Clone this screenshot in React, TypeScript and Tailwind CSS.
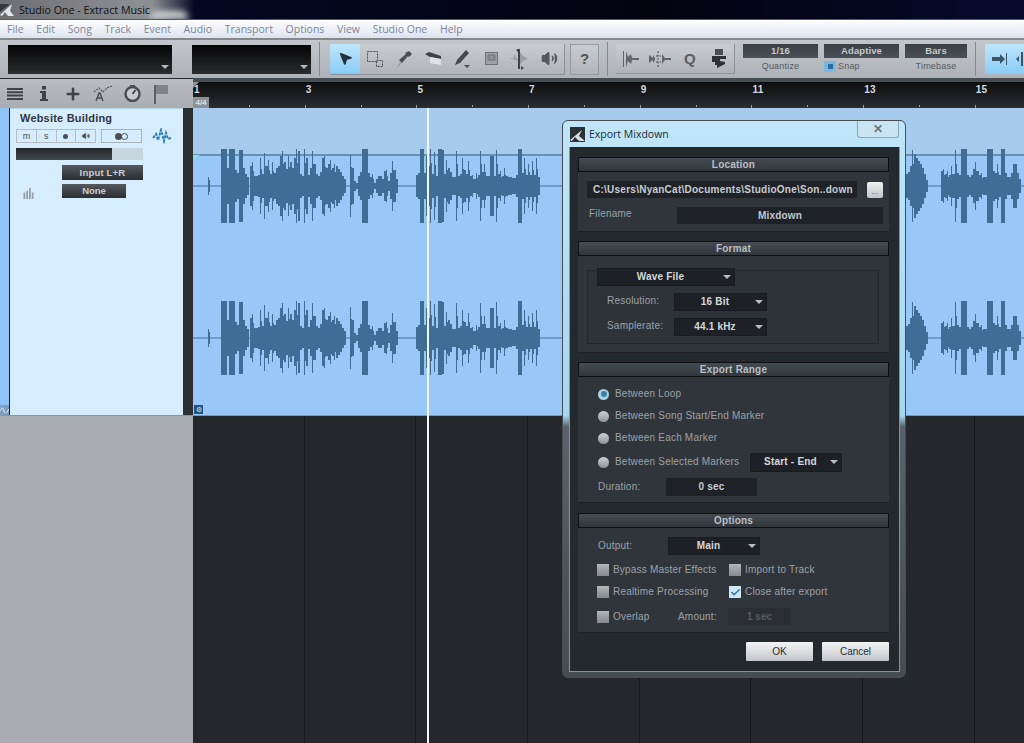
import React from 'react';
import { MousePointer2, Volume2, Plus, Check } from 'lucide-react';

const menuItems = ['File', 'Edit', 'Song', 'Track', 'Event', 'Audio', 'Transport', 'Options', 'View', 'Studio One', 'Help'];
const rulerLabels = ['1', '3', '5', '7', '9', '11', '13', '15'];

// amplitude per 2px column, [start x, amps]
const waveRuns: [number, number[]][] = [
  [208, [9]],
  [221, [37, 37, 37, 18, 37, 37, 37, 16, 13, 36, 36, 18, 12, 9]],
  [250, [20, 24, 10, 10, 11, 28, 12, 33, 20, 26, 12, 24, 13, 18, 20, 30, 35, 24, 17, 30, 24, 18, 28, 37, 35, 12, 10, 37, 28, 11, 18, 35, 22, 12, 10, 14, 28, 30, 18, 22, 26, 18, 22, 20, 17, 14, 10, 7]],
  [350, [31, 18, 5, 3, 10, 14, 37, 37, 37, 13, 9, 12, 3, 7, 10, 10, 7, 15, 16, 5, 13, 25, 16, 7]],
  [416, [11, 13, 37, 37, 13, 30, 20]],
  [430, [37, 12, 34, 10, 37, 37, 36, 12, 26, 18, 14, 9, 9, 35, 10, 12, 28, 16, 12, 25, 10, 11, 7, 13, 11, 35, 14, 22, 10, 10, 30, 30, 10, 36, 12, 15, 10, 18, 10, 9, 9, 8, 8, 11, 37, 37, 13, 28, 11, 22, 11, 25, 11, 28, 9]],
  [906, [12, 14, 20, 36, 32, 28, 25, 22, 18, 12, 6]],
  [941, [15, 17, 12, 15, 11, 20, 12, 36, 13, 11, 37, 37, 37, 11, 9, 11, 17, 24, 15, 11, 13, 9, 9, 37, 37, 37, 15, 13, 22, 11, 37, 37, 13, 9, 9, 13, 22, 22, 13, 7]],
];

function Waveform() {
  const rects: React.ReactNode[] = [];
  [186, 338].forEach((center) => {
    rects.push(<rect key={`line-${center}`} x={193} y={center - 0.5} width={831} height={1} fill="#44739b" />);
    waveRuns.forEach(([start, amps]) => {
      amps.forEach((amp, i) => {
        const x = start + i * 2;
        const wide = (amps[i - 1] ?? 0) >= amp || (amps[i + 1] ?? 0) >= amp;
        const core = Math.min(amp, Math.round(amp * 0.62));
        rects.push(<rect key={`${center}-${start}-${i}`} x={x} y={center - core} width={2} height={core * 2} fill="#3f6d95" />);
        rects.push(<rect key={`${center}-${start}-${i}-t`} x={x} y={center - amp} width={wide ? 2 : 1} height={amp * 2} fill="#3f6d95" />);
      });
    });
  });
  return (
    <svg className="absolute inset-0" width={831} height={307} viewBox="193 108 831 307">
      <path d="M193 155h831" stroke="#2c5679" strokeWidth="1" />
      <path d="M193 161l7-6h-7z" fill="#7fe0ea" />
      {rects}
    </svg>
  );
}

function ToolIcon({ children }: { children: React.ReactNode }) {
  return <div className="flex-1 flex items-center justify-center">{children}</div>;
}

function Dropdown({ w, h = 'h-[18px]', label }: { w: string; h?: string; label: string }) {
  return (
    <div className={`${w} ${h} flex items-center bg-[#1d2126] border border-[#181b1f] text-[#d5d8db] font-bold text-[10px] leading-[12px] tracking-[0.2px]`}>
      <span className="flex-1 text-center pl-1">{label}</span>
      <span className="w-0 h-0 mr-[3px] ml-1 border-x-[4px] border-t-[4px] border-x-transparent border-t-[#b9bdc2]" />
    </div>
  );
}

function Section({ title, h, mt, children }: { title: string; h: string; mt: string; children: React.ReactNode }) {
  return (
    <div className={`${h} ${mt} w-[311px] flex flex-col bg-[#30353c] border-b border-[#1c1f23]`}>
      <div className="h-[15px] shrink-0 flex items-center justify-center bg-gradient-to-b from-[#454b52] to-[#31363c] border border-[#0d0f12] text-[#b9bec3] font-bold text-[10px] leading-[12px] tracking-[0.2px]">
        {title}
      </div>
      {children}
    </div>
  );
}

const labelText = 'text-[#9ca1a6] text-[10px] leading-[12px] tracking-[0.2px] whitespace-nowrap';

function Radio({ label, on }: { label: string; on?: boolean }) {
  return (
    <div className="flex items-center">
      <span className={`w-[11px] h-[11px] rounded-full flex items-center justify-center ${on ? 'bg-[#a9d3e6]' : 'bg-gradient-to-b from-[#d0d2d4] to-[#8f9296]'}`}>
        {on && <span className="w-[6px] h-[6px] rounded-full bg-[#3f7ea3]" />}
      </span>
      <span className={`ml-[6px] ${labelText}`}>{label}</span>
    </div>
  );
}

function CheckBox({ label, on, w }: { label: string; on?: boolean; w: string }) {
  return (
    <div className={`${w} flex items-center`}>
      <span className={`w-[12px] h-[12px] flex items-center justify-center ${on ? 'bg-[#cfe6f4]' : 'bg-gradient-to-b from-[#b4b6b9] to-[#85888c]'}`}>
        {on && <Check size={11} strokeWidth={3.5} className="text-[#2f78a8]" />}
      </span>
      <span className={`ml-[4px] ${labelText}`}>{label}</span>
    </div>
  );
}

function ExportDialog() {
  return (
    <div className="absolute left-[562px] top-[120px] w-[344px] h-[558px] rounded-[6px] border border-[#454c52] bg-[linear-gradient(to_bottom,#bfe6f8_0%,#a5d6f2_53%,#59626a_55%,#454c52_100%)] px-[6px] flex flex-col">
      <div className="h-[26px] shrink-0 flex items-center relative">
        <svg width="15" height="15" viewBox="0 0 15 15" className="ml-[1px]">
          <rect width="15" height="15" fill="#2b3036" />
          <path d="M0 13L12 3l-3 6 6 5H9L5 10l-3 4z" fill="#d8dde2" />
        </svg>
        <span className="ml-[4px] text-[#1c2a36] text-[10.5px] leading-[14px] font-['Open_Sans',sans-serif]">Export Mixdown</span>
        <div className="absolute right-[0px] top-0 w-[42px] h-[17px] rounded-b-[3px] border border-t-0 border-[#8aa3b5] bg-[#c9e4f2] flex items-center justify-center text-[#6a7882] font-bold text-[12px] leading-[14px]">
          ✕
        </div>
      </div>
      <div className="w-[331px] h-[525px] bg-[#24292e] border-b border-x border-[#87919a] flex flex-col items-start pl-[8px]">
        <Section title="Location" h="h-[75px]" mt="mt-[10px]">
          <div className="mt-[9px] ml-[9px] flex items-center">
            <div className="w-[270px] h-[17px] bg-[#1e2227] text-[#c9ccd0] font-bold text-[10px] leading-[12px] tracking-[0.25px] flex items-center pl-[6px] whitespace-nowrap overflow-hidden">
              C:\Users\NyanCat\Documents\StudioOne\Son..down
            </div>
            <div className="ml-[10px] w-[16px] h-[16px] rounded-[2px] bg-gradient-to-b from-[#f0f1f2] to-[#c2c5c8] text-[#666] text-[9px] leading-[18px] text-center">...</div>
          </div>
          <div className="mt-[9px] ml-[11px] flex items-center">
            <span className={`w-[88px] -mt-[3px] ${labelText}`}>Filename</span>
            <div className="w-[206px] h-[17px] bg-[#1e2227] text-[#c4c7cb] font-bold text-[10px] leading-[12px] tracking-[0.2px] flex items-center justify-center">Mixdown</div>
          </div>
        </Section>
        <Section title="Format" h="h-[112px]" mt="mt-[9px]">
          <div className="relative ml-[9px] mt-[14px] w-[292px] h-[74px] border border-[#23272c] bg-[#2e333a] flex flex-col">
            <div className="absolute -top-[3px] left-[9px]">
              <Dropdown w="w-[138px]" label="Wave File" />
            </div>
            <div className="mt-[22px] ml-[19px] flex items-center">
              <span className={`w-[67px] -mt-[2px] ${labelText}`}>Resolution:</span>
              <Dropdown w="w-[93px]" label="16 Bit" />
            </div>
            <div className="mt-[7px] ml-[19px] flex items-center">
              <span className={`w-[67px] -mt-[2px] ${labelText}`}>Samplerate:</span>
              <Dropdown w="w-[93px]" label="44.1 kHz" />
            </div>
          </div>
        </Section>
        <Section title="Export Range" h="h-[141px]" mt="mt-[9px]">
          <div className="ml-[20px] mt-[6px] flex flex-col">
            <div className="h-[22px] flex items-center"><Radio label="Between Loop" on /></div>
            <div className="h-[22px] flex items-center"><Radio label="Between Song Start/End Marker" /></div>
            <div className="h-[22px] flex items-center"><Radio label="Between Each Marker" /></div>
            <div className="h-[22px] mt-[2px] flex items-center">
              <div className="w-[152px]"><Radio label="Between Selected Markers" /></div>
              <Dropdown w="w-[92px]" h="h-[19px]" label="Start - End" />
            </div>
          </div>
          <div className="ml-[20px] mt-[5px] flex items-center">
            <span className={`w-[68px] ${labelText}`}>Duration:</span>
            <div className="w-[91px] h-[18px] bg-[#1e2227] text-[#c9ccd0] font-bold text-[10px] leading-[12px] tracking-[0.2px] flex items-center justify-center">0 sec</div>
          </div>
        </Section>
        <Section title="Options" h="h-[120px]" mt="mt-[10px]">
          <div className="ml-[20px] mt-[9px] flex items-center">
            <span className={`w-[70px] ${labelText}`}>Output:</span>
            <Dropdown w="w-[92px]" label="Main" />
          </div>
          <div className="ml-[19px] mt-[9px] flex items-center">
            <CheckBox w="w-[132px]" label="Bypass Master Effects" />
            <CheckBox w="w-[110px]" label="Import to Track" />
          </div>
          <div className="ml-[19px] mt-[10px] flex items-center">
            <CheckBox w="w-[132px]" label="Realtime Processing" />
            <CheckBox w="w-[110px]" label="Close after export" on />
          </div>
          <div className="ml-[19px] mt-[10px] flex items-center">
            <CheckBox w="w-[81px]" label="Overlap" />
            <span className={`w-[50px] ${labelText}`}>Amount:</span>
            <div className="w-[63px] h-[17px] bg-[#2a2e33] text-[#555a60] font-bold text-[10px] leading-[12px] flex items-center justify-center">1 sec</div>
          </div>
        </Section>
        <div className="mt-[9px] ml-[168px] flex gap-[9px]">
          <div className="w-[67px] h-[19px] rounded-[1px] bg-gradient-to-b from-[#f4f4f5] to-[#c3c6c9] text-[#2a2d30] text-[10px] leading-[12px] flex items-center justify-center">OK</div>
          <div className="w-[67px] h-[19px] rounded-[1px] bg-gradient-to-b from-[#f4f4f5] to-[#c3c6c9] text-[#2a2d30] text-[10px] leading-[12px] flex items-center justify-center">Cancel</div>
        </div>
      </div>
    </div>
  );
}

function ToolbarDark({ w, label, caption, snap }: { w: string; label: string; caption: string; snap?: boolean }) {
  return (
    <div className={`${w} h-[30px] flex flex-col`}>
      <div className="h-[14px] bg-gradient-to-b from-[#3a3f45] to-[#4b5056] text-[#c5c8cb] font-bold text-[9.5px] leading-[12px] tracking-[0.1px] flex items-center justify-center">{label}</div>
      {snap ? (
        <div className="mt-[2px] flex items-center text-[#55595e] text-[9px] leading-[12px] tracking-[0.2px]">
          <span className="w-[12px] h-[11px] bg-[#7fb6de] flex items-center justify-center mr-[2px]">
            <span className="w-[5px] h-[5px] bg-[#2a6ea0]" />
          </span>
          {caption}
        </div>
      ) : (
        <div className="mt-[2px] text-center text-[#55595e] text-[9px] leading-[12px] tracking-[0.2px]">{caption}</div>
      )}
    </div>
  );
}

export default function App() {
  return (
    <div className="relative w-[1024px] h-[743px] overflow-hidden flex flex-col bg-[#24282d] font-['Liberation_Sans',Arial,sans-serif]">
      {/* window title */}
      <div className="relative h-[19px] shrink-0 bg-[linear-gradient(to_right,#050a2a_0%,#02030f_64%,#070a2c_100%)] overflow-hidden">
        <div className="absolute left-0 top-0 w-[195px] h-[19px] bg-[linear-gradient(to_right,#6d6f73_0%,#8c8e92_70%,#8c8e92_78%,transparent_100%)]" />
        <div className="absolute left-[150px] top-[11px] w-[38px] h-[8px] rounded-t-full bg-[#cfd3d6] blur-[3px]" />
        <div className="relative flex items-center h-full">
          <svg width="15" height="17" viewBox="0 0 15 17">
            <path d="M0 14L12 3l-2 7 4 5H8L5 11l-3 4z" fill="#e4e7ea" />
            <path d="M0 3h10L0 11z" fill="#33383d" />
          </svg>
          <span className="ml-[4px] text-[#101216] text-[10.7px] leading-[14px] font-['Open_Sans',sans-serif]">Studio One - Extract Music</span>
        </div>
      </div>
      {/* menu */}
      <div className="h-[19px] shrink-0 border-t border-[#55595e] bg-gradient-to-b from-[#ffffff] to-[#dde3ef] flex items-center pl-[7px] gap-[12.7px] text-[#7b8696] text-[10.5px] leading-[14px] font-['Open_Sans',sans-serif]">
        {menuItems.map((m) => (
          <span key={m}>{m}</span>
        ))}
      </div>
      {/* toolbar */}
      <div className="h-[40px] shrink-0 border-t-2 border-[#85888c] bg-gradient-to-b from-[#c3c6cb] to-[#aeb2b7] flex items-center pl-[8px]">
        <div className="relative w-[164px] h-[29px] bg-gradient-to-b from-[#060607] to-[#2a2c2e]">
          <span className="absolute right-[3px] bottom-[5px] w-0 h-0 border-x-[4px] border-t-[4px] border-x-transparent border-t-[#b5b8bb]" />
        </div>
        <div className="relative ml-[20px] w-[119px] h-[29px] bg-gradient-to-b from-[#060607] to-[#2a2c2e]">
          <span className="absolute right-[3px] bottom-[5px] w-0 h-0 border-x-[4px] border-t-[4px] border-x-transparent border-t-[#b5b8bb]" />
        </div>
        <div className="ml-[8px] w-px h-[34px] bg-[#85898e]" />
        <div className="ml-[10px] w-[235px] h-[31px] flex bg-gradient-to-b from-[#c9ccd0] to-[#b0b3b8] border-b border-r border-[#8d9095]">
          <div className="w-[30px] bg-gradient-to-b from-[#bfe6fd] to-[#88ccf6] flex items-center justify-center">
            <MousePointer2 size={15} className="text-[#25313d] fill-[#25313d]" />
          </div>
          <ToolIcon>
            <svg width="18" height="18" viewBox="0 0 18 18" fill="none" stroke="#4b4f55">
              <rect x="1.5" y="1.5" width="10" height="10" strokeDasharray="2 1" />
              <rect x="10.5" y="10.5" width="6" height="6" strokeDasharray="2 1" />
            </svg>
          </ToolIcon>
          <ToolIcon>
            <svg width="18" height="18" viewBox="0 0 18 18">
              <path d="M14 1l3 3-3 3-1-1-6 7-3-3 7-6-1-1z" fill="#4a4e53" />
              <path d="M5 12l-3 5 1 0 4-4z" fill="#9a9da1" />
            </svg>
          </ToolIcon>
          <ToolIcon>
            <svg width="18" height="18" viewBox="0 0 18 18">
              <path d="M1 4l4-2 12 4v3L6 7z" fill="#3e4247" />
              <path d="M6 7l11 2v6l-11-2z" fill="#dfe1e3" />
            </svg>
          </ToolIcon>
          <ToolIcon>
            <svg width="20" height="20" viewBox="0 0 20 20">
              <path d="M14 1l3 3-9 10-5 2 2-5z" fill="#45494e" />
              <path d="M12 16h6l-3 3z" fill="#45494e" />
            </svg>
          </ToolIcon>
          <ToolIcon>
            <svg width="13" height="13" viewBox="0 0 13 13" fill="none" stroke="#6d7176">
              <rect x="0.5" y="0.5" width="12" height="12" fill="#9fa3a8" />
              <path d="M3 3h7v5H3zM5 3v5M8 3v5" />
            </svg>
          </ToolIcon>
          <ToolIcon>
            <svg width="22" height="24" viewBox="0 0 22 24">
              <path d="M2 12h2l2-5 2 7 3-9 3 4 2 1 3 2-3 1-2 1-3 4-3-7-2 3-2-3H2z" fill="#9a9da1" />
              <rect x="9" y="2" width="2" height="20" fill="#3f4347" />
              <path d="M7 3l2-1v3zM12 19l3 2-3 2z" fill="#3f4347" />
            </svg>
          </ToolIcon>
          <ToolIcon>
            <Volume2 size={17} className="text-[#55595e] fill-[#55595e]" />
          </ToolIcon>
        </div>
        <div className="ml-[5px] w-[29px] h-[31px] bg-gradient-to-b from-[#c9ccd0] to-[#b0b3b8] border border-[#95989d] flex items-center justify-center text-[#4f5358] font-bold text-[15px] leading-[18px]">?</div>
        <div className="ml-[8px] w-px h-[34px] bg-[#85898e]" />
        <div className="ml-[8px] w-[119px] h-[30px] flex bg-gradient-to-b from-[#c9ccd0] to-[#b0b3b8] border-b border-r border-[#8d9095]">
          <ToolIcon>
            <svg width="18" height="18" viewBox="0 0 18 18">
              <path d="M1 1h1v16H1zM4 1l2 6 3-3 1 4h7v2h-7l-1 4-3-3-2 6z" fill="#62666b" />
            </svg>
          </ToolIcon>
          <ToolIcon>
            <svg width="24" height="18" viewBox="0 0 24 18">
              <path d="M1 5l4 3v-3l2 3v2l-2 3v-3l-4 3zM14 4l3 4h6v2h-6l-3 4z" fill="#62666b" />
              <path d="M10 1v16M8 6h5M8 12h5" stroke="#4b4f54" strokeDasharray="2 1.5" fill="none" />
            </svg>
          </ToolIcon>
          <ToolIcon>
            <span className="text-[#5c6065] font-bold text-[15px] leading-[18px]">Q</span>
          </ToolIcon>
          <ToolIcon>
            <svg width="14" height="20" viewBox="0 0 14 20">
              <rect x="3" y="0" width="8" height="6" fill="#4a4e53" />
              <path d="M0 7h14v3H8v2l5 1v2l-8 4v-3H3v-3H0z" fill="#2e3135" />
            </svg>
          </ToolIcon>
        </div>
        <div className="ml-[8px]"><ToolbarDark w="w-[75px]" label="1/16" caption="Quantize" /></div>
        <div className="ml-[6px]"><ToolbarDark w="w-[75px]" label="Adaptive" caption="Snap" snap /></div>
        <div className="ml-[6px]"><ToolbarDark w="w-[62px]" label="Bars" caption="Timebase" /></div>
        <div className="ml-[8px] w-px h-[34px] bg-[#85898e]" />
        <div className="ml-[9px] flex-1 min-w-0 overflow-hidden h-[30px] bg-gradient-to-b from-[#bfe6fd] to-[#88ccf6] flex items-center pl-[7px] gap-[8px]">
          <svg width="16" height="12" viewBox="0 0 16 12" className="shrink-0">
            <path d="M0 4h8V1l5 5-5 5V8H0z" fill="#3b5468" />
            <rect x="14" y="0" width="1" height="12" fill="#3b5468" />
          </svg>
          <svg width="12" height="14" viewBox="0 0 12 14" fill="#3b5468" className="shrink-0">
            <path d="M0 7l3-3v6zM12 7L9 4v6z" />
            <rect x="5" y="0" width="2" height="14" />
          </svg>
        </div>
      </div>
      {/* ruler row */}
      <div className="h-[30px] shrink-0 flex">
        <div className="w-[193px] shrink-0 bg-gradient-to-b from-[#b9bcc1] to-[#a9acb1] border-t border-[#2a2c2f] flex items-center pl-[7px]">
          <svg width="16" height="12" viewBox="0 0 16 12" fill="#3f4347">
            <path d="M0 0h16v2H0zM0 3.3h16v2H0zM0 6.6h16v2H0zM0 10h16v2H0z" />
          </svg>
          <svg width="10" height="15" viewBox="0 0 10 15" fill="#3f4347" className="ml-[16px]">
            <rect x="3" y="0" width="4" height="3.5" />
            <path d="M1 5h6v8h2v2H1v-2h2V7H1z" />
          </svg>
          <Plus size={18} strokeWidth={3.5} className="text-[#3f4347] ml-[15px]" />
          <svg width="20" height="17" viewBox="0 0 20 17" fill="none" className="ml-[11px]">
            <path d="M1 7l5-4 4 4 4-4 5-2" stroke="#55595e" strokeWidth="1.2" strokeDasharray="2 1" />
            <path d="M3 16l3-8h1l3 8M4.5 13h4" stroke="#45494e" strokeWidth="1.3" />
          </svg>
          <svg width="17" height="17" viewBox="0 0 17 17" fill="none" className="ml-[11px]">
            <circle cx="8.5" cy="9" r="7" fill="#c9cbce" stroke="#4a4e53" strokeWidth="2.4" />
            <path d="M8.5 9l3-4" stroke="#33373b" strokeWidth="1.6" />
            <rect x="6" y="0" width="5" height="2" fill="#4a4e53" />
          </svg>
          <svg width="14" height="20" viewBox="0 0 14 20" className="ml-[13px]">
            <rect x="0" y="1" width="2" height="19" fill="#5c6065" />
            <rect x="2" y="1" width="12" height="9" fill="#80848a" />
          </svg>
        </div>
        <div className="relative flex-1 min-w-0 overflow-hidden border-t-[4px] border-[#454d53] bg-gradient-to-b from-[#0c0d0e] to-[#2b2f33] flex">
          {rulerLabels.map((l) => (
            <div key={l} className="w-[111.7px] shrink-0 flex flex-col justify-between">
              <span className="pl-[1px] pt-[2px] text-[#d7d9db] font-bold text-[10px] leading-[12px] tracking-[0.2px]">{l}</span>
              <div className="flex">
                <div className="w-1/2"><div className="w-px h-[3px] bg-[#9a9ea3]" /></div>
                <div className="w-1/2"><div className="w-px h-[2px] bg-[#9a9ea3]" /></div>
              </div>
            </div>
          ))}
          <svg width="10" height="6" viewBox="0 0 10 6" className="absolute left-0 top-0">
            <path d="M0 0h6L0 6z" fill="#8b9096" />
          </svg>
          <div className="absolute left-0 bottom-0 w-[16px] h-[11px] bg-[#8d9094] text-[#dfe1e3] font-bold text-[8px] leading-[11px] text-center">4/4</div>
        </div>
      </div>
      {/* track */}
      <div className="h-[308px] shrink-0 flex border-b border-[#7b98b2]">
        <div className="w-[9px] shrink-0 bg-[#8fc5f6] flex flex-col justify-end">
          <div className="h-[10px] bg-[#7d9ec4] flex items-center justify-center">
            <svg width="9" height="6" viewBox="0 0 9 6" fill="none" stroke="#e6eef6"><path d="M0 4c2-4 3-4 4 0s3 2 5-2" /></svg>
          </div>
        </div>
        <div className="w-px shrink-0 bg-[#14181c]" />
        <div className="w-[173px] shrink-0 bg-[#d6edfe] border-t border-[#b5d4ea] pl-[6px]">
          <div className="pl-[4px] mt-[3px] text-[#32363b] font-bold text-[11px] tracking-[0.2px] leading-[13px]">Website Building</div>
          <div className="mt-[4px] h-[14px] flex items-center">
            <div className="w-[80px] h-[14px] border border-[#b3bdc5] flex text-[#4a4e53] text-[9px] leading-[10px]">
              <span className="flex-1 flex items-center justify-center border-r border-[#b3bdc5]">m</span>
              <span className="flex-1 flex items-center justify-center border-r border-[#b3bdc5]">s</span>
              <span className="flex-1 flex items-center justify-center border-r border-[#b3bdc5]"><span className="w-[5px] h-[5px] rounded-full bg-[#4a4e53]" /></span>
              <span className="flex-1 flex items-center justify-center"><Volume2 size={8} className="fill-[#4a4e53]" /></span>
            </div>
            <div className="ml-[5px] w-[41px] h-[14px] border border-[#a9b3bb] flex items-center justify-center">
              <span className="w-[7px] h-[7px] rounded-full bg-[#4a4e53]" />
              <span className="w-[7px] h-[7px] rounded-full border border-[#4a4e53] -ml-px" />
            </div>
            <svg width="20" height="16" viewBox="0 0 20 16" className="ml-[10px]">
              <path d="M1 10l3-4 2 6 3-10 3 11 2-8 2 6 3-1" fill="none" stroke="#2f7eb8" strokeWidth="2" strokeDasharray="3 1" />
            </svg>
          </div>
          <div className="mt-[5px] w-[127px] h-[12px] bg-[#c7d5df]">
            <div className="w-[96px] h-full bg-gradient-to-b from-[#23262a] to-[#44484c]" />
          </div>
          <div className="mt-[5px] ml-[46px] w-[81px] h-[15px] bg-gradient-to-b from-[#55585c] to-[#2b2e32] text-[#c9ccd0] font-bold text-[9.5px] leading-[12px] tracking-[0.2px] flex items-center justify-center">Input L+R</div>
          <div className="mt-[4px] flex items-start">
            <svg width="12" height="11" viewBox="0 0 12 12" fill="#9aa2a8" className="ml-[7px] mt-[4px]">
              <path d="M0 5h2v7H0zM3 3h2v9H3zM6 0h2v12H6zM9 5h2v7H9z" />
            </svg>
            <div className="ml-[27px] w-[64px] h-[14px] bg-gradient-to-b from-[#55585c] to-[#2b2e32] text-[#c9ccd0] font-bold text-[9.5px] leading-[12px] flex items-center justify-center">None</div>
          </div>
        </div>
        <div className="w-[10px] shrink-0 bg-[#2d3033]" />
        <div className="relative flex-1 min-w-0 flex flex-col">
          <div className="h-[47px] bg-[#a6cbec]" />
          <div className="flex-1 bg-[#99c7f8]" />
          <Waveform />
          <div className="absolute left-[1px] bottom-[1px] w-[9px] h-[9px] bg-[#1f5684] text-[#cfe0ee] text-[7px] leading-[9px] text-center">⚙</div>
        </div>
      </div>
      {/* empty arrange area */}
      <div className="flex-1 flex">
        <div className="w-[193px] shrink-0 bg-[#a9adb3]" />
        <div className="flex-1 min-w-0 overflow-hidden flex bg-[#24282d]">
          {[0, 1, 2, 3, 4, 5, 6, 7].map((i) => (
            <div key={i} className="w-[111.7px] shrink-0 border-r border-[#14171a]" />
          ))}
        </div>
      </div>
      {/* playhead */}
      <div className="absolute left-[427px] top-[108px] bottom-0 w-[2px] bg-[#f2f6f9]" />
      <ExportDialog />
    </div>
  );
}
